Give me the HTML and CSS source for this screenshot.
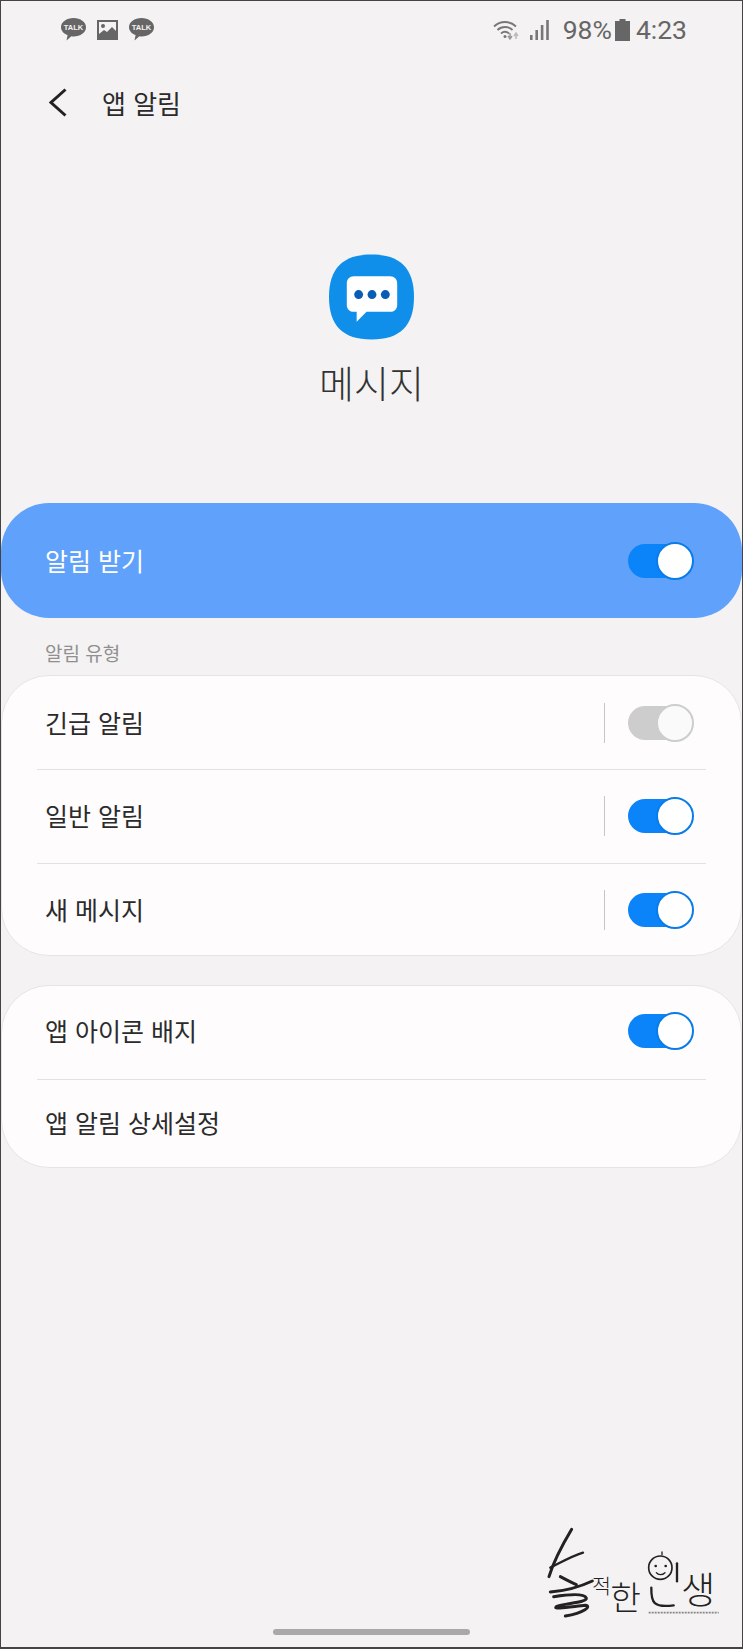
FILE: index.html
```html
<!DOCTYPE html>
<html lang="ko">
<head>
  <meta charset="utf-8">
  <title>앱 알림</title>
  <link rel="stylesheet" href="styles.css">
</head>
<body>
  <div class="screen">
    <div class="status-bar">
      <div class="status-left">
        <svg class="talk-icon" viewBox="0 0 25 23">
          <path d="M12.5 0C19.4 0 25 4 25 9.2S19.4 18.4 12.5 18.4C11.7 18.4 11 18.3 10.3 18.2L5.5 22.5 6.6 17.1C2.6 15.6 0 12.6 0 9.2 0 4 5.6 0 12.5 0Z" fill="#666"/>
          <text x="12.5" y="12" class="talk-text">TALK</text>
        </svg>
        <svg class="pic-icon" viewBox="0 0 21 20">
          <rect width="21" height="20" fill="#666"/>
          <rect x="2" y="2" width="17" height="12.5" fill="#f4f2f3"/>
          <circle cx="6" cy="6" r="2" fill="#666"/>
          <path d="M2 14 7 10 10 12 15 7 19 11V16H2Z" fill="#666"/>
        </svg>
        <svg class="talk-icon" viewBox="0 0 25 23">
          <path d="M12.5 0C19.4 0 25 4 25 9.2S19.4 18.4 12.5 18.4C11.7 18.4 11 18.3 10.3 18.2L5.5 22.5 6.6 17.1C2.6 15.6 0 12.6 0 9.2 0 4 5.6 0 12.5 0Z" fill="#666"/>
          <text x="12.5" y="12" class="talk-text">TALK</text>
        </svg>
      </div>
      <div class="status-right">
        <svg class="wifi-icon" viewBox="0 0 26 22">
          <g fill="none" stroke="#777" stroke-width="1.8">
            <path d="M1 7.5C7 1.5 17 1.5 23 7.5"/>
            <path d="M4.5 11C8.5 7 15.5 7 19.5 11"/>
            <path d="M8 14.5C10.5 12.3 13.5 12.3 16 14.5"/>
          </g>
          <circle cx="12" cy="17.5" r="1.5" fill="#777"/>
          <path d="M17 14V19M15 17 17 20 19 17" fill="none" stroke="#999" stroke-width="1.5"/>
          <path d="M23 20V15M21 17 23 14 25 17" fill="none" stroke="#bbb" stroke-width="1.5"/>
        </svg>
        <svg class="signal-icon" viewBox="0 0 19 20">
          <rect x="0" y="15" width="2.6" height="5" fill="#777"/>
          <rect x="5.4" y="10" width="2.6" height="10" fill="#777"/>
          <rect x="10.8" y="5" width="2.6" height="15" fill="#777"/>
          <rect x="16.2" y="0" width="2.6" height="20" fill="#777"/>
        </svg>
        <span class="battery-text">98%</span>
        <svg class="battery-icon" viewBox="0 0 15 22">
          <path d="M4.5 0H10.5V2H15V22H0V2H4.5Z" fill="#666"/>
        </svg>
        <span class="clock">4:23</span>
      </div>
    </div>

    <div class="app-bar">
      <svg class="back-icon" viewBox="0 0 18 29">
        <path d="M16.5 1.5 2 14.5 16.5 27.5" fill="none" stroke="#222" stroke-width="3"/>
      </svg>
      <span class="app-bar-title">앱 알림</span>
    </div>

    <div class="hero">
      <svg class="app-icon" viewBox="0 0 86 86">
        <path d="M43 0C72 0 86 14 86 43S72 86 43 86 0 72 0 43 14 0 43 0Z" fill="#0f8fea"/>
        <path d="M25 22H62C66 22 69 25 69 29V51C69 55 66 58 62 58H38L28 68V58H25C21 58 18 55 18 51V29C18 25 21 22 25 22Z" fill="#fff"/>
        <circle cx="30" cy="40.500" r="4.500" fill="#0b5cb5"/>
        <circle cx="43.500" cy="40.500" r="4.500" fill="#0b5cb5"/>
        <circle cx="57" cy="40.500" r="4.500" fill="#0b5cb5"/>
      </svg>
      <div class="hero-title">메시지</div>
    </div>

    <div class="master-card">
      <span class="row-label">알림 받기</span>
      <span class="switch"></span>
    </div>

    <div class="section-label">알림 유형</div>

    <div class="card">
      <div class="row row-first">
        <span class="row-label">긴급 알림</span>
        <span class="row-divider"></span>
        <span class="switch switch-off"></span>
      </div>
      <div class="row row-mid">
        <span class="row-label">일반 알림</span>
        <span class="row-divider"></span>
        <span class="switch"></span>
      </div>
      <div class="row row-last">
        <span class="row-label">새 메시지</span>
        <span class="row-divider"></span>
        <span class="switch"></span>
      </div>
    </div>

    <div class="card card-second">
      <div class="row row-first">
        <span class="row-label">앱 아이콘 배지</span>
        <span class="switch"></span>
      </div>
      <div class="row row-last row-short">
        <span class="row-label">앱 알림 상세설정</span>
      </div>
    </div>

    <div class="footer">
      <svg class="logo" viewBox="150 80 525 300">
        <g fill="none" stroke="#222" stroke-linecap="round">
          <path d="M224 90C200 130 172 180 156 232" stroke-width="9"/>
          <path d="M160 205C190 190 225 170 258 160" stroke-width="7"/>
          <path d="M190 232C205 240 220 248 238 256" stroke-width="9"/>
          <path d="M160 278C200 275 250 262 286 245" stroke-width="9"/>
          <path d="M170 292C215 285 262 282 268 296C272 310 200 312 178 322C165 332 225 322 265 318C285 320 262 340 205 350" stroke-width="9"/>
          <circle cx="490" cy="205" r="35" stroke-width="5"/>
          <path d="M478 220C484 228 496 228 504 220" stroke-width="4"/>
          <path d="M495 158V166" stroke-width="4"/>
          <path d="M540 192V246" stroke-width="7"/>
          <path d="M463 265C462 310 470 326 530 318" stroke-width="7"/>
          <path d="M455 340H665" stroke="#888" stroke-width="5" stroke-dasharray="6 3" stroke-linecap="butt"/>
        </g>
        <circle cx="476" cy="200" r="4" fill="#222"/>
        <circle cx="506" cy="200" r="4" fill="#222"/>
        <text x="285" y="284" class="logo-text logo-small">적</text>
        <text x="340" y="332" class="logo-text logo-mid">한</text>
        <text x="552" y="314" class="logo-text logo-big">생</text>
      </svg>
      <div class="home-bar"></div>
    </div>
  </div>
</body>
</html>
```

FILE: styles.css
```css
html, body {
  margin: 0;
  padding: 0;
  background-color: #fff;
}

body {
  width: 743px;
  height: 1649px;
  overflow: hidden;
  font-family: "Noto Sans CJK KR", "Noto Sans", sans-serif;
}

.screen {
  box-sizing: border-box;
  width: 743px;
  height: 1649px;
  display: flex;
  flex-direction: column;
  background-color: #f4f2f3;
  border: 1px solid #444;
  border-bottom-width: 2px;
}

.status-bar {
  height: 57px;
  display: flex;
  align-items: center;
  justify-content: space-between;
  padding: 0 55px 0 60px;
}

.status-left {
  display: flex;
  align-items: center;
  gap: 11px;
}

.talk-icon {
  width: 25px;
  height: 23px;
}

.talk-text {
  font-family: "Liberation Sans", sans-serif;
  font-size: 7.500px;
  font-weight: bold;
  fill: #f4f2f3;
  text-anchor: middle;
}

.pic-icon {
  width: 21px;
  height: 20px;
}

.status-right {
  display: flex;
  align-items: center;
  color: #666;
  font-family: Roboto, sans-serif;
  font-size: 26.500px;
}

.wifi-icon {
  width: 26px;
  height: 22px;
  margin-right: 11px;
}

.signal-icon {
  width: 19px;
  height: 20px;
  margin-right: 14px;
}

.battery-icon {
  width: 15px;
  height: 22px;
  margin: 0 6px 0 3px;
}

.app-bar {
  height: 88px;
  display: flex;
  align-items: center;
  padding-left: 48px;
}

.back-icon {
  width: 18px;
  height: 29px;
  margin-right: 35px;
}

.app-bar-title {
  font-size: 26px;
  color: #2b2b2b;
}

.hero {
  height: 357px;
  box-sizing: border-box;
  padding-top: 108px;
  display: flex;
  flex-direction: column;
  align-items: center;
}

.app-icon {
  width: 85px;
  height: 86px;
}

.hero-title {
  margin-top: 17px;
  font-size: 38px;
  font-weight: 300;
  line-height: 50px;
  color: #333;
}

.master-card {
  height: 115px;
  display: flex;
  align-items: center;
  justify-content: space-between;
  padding: 0 49px 0 44px;
  border-radius: 48px;
  background-color: #60a2fb;
  color: #fff;
}

.section-label {
  padding: 23px 0 10px 44px;
  font-size: 19px;
  line-height: 24px;
  color: #909090;
}

.card {
  border: 1px solid #e6e5e6;
  border-radius: 48px;
  background-color: #fefcfd;
}

.card-second {
  margin-top: 29px;
}

.row {
  box-sizing: border-box;
  height: 94px;
  margin: 0 35px 0 35px;
  padding: 0 13px 0 8px;
  display: flex;
  align-items: center;
  border-bottom: 1px solid #e2e2e2;
}

.row-mid {
  padding-bottom: 2px;
}

.card-second .row-first {
  padding-bottom: 4px;
}

.row-last {
  height: 91px;
  border-bottom: 0;
}

.card-second .row-short {
  height: 87px;
  padding-bottom: 2px;
}

.row-label {
  font-size: 25px;
  margin-right: auto;
  margin-bottom: 2px;
  color: #2b2b2b;
}

.master-card .row-label {
  color: #fff;
}

.row-divider {
  width: 1px;
  height: 40px;
  margin-right: 23px;
  background-color: #c6c6c6;
}

.switch {
  position: relative;
  width: 65px;
  height: 34px;
  border-radius: 17px;
  background-color: #0a84f8;
}

.switch::after {
  content: "";
  position: absolute;
  right: -1px;
  top: -2px;
  box-sizing: border-box;
  width: 38px;
  height: 38px;
  border: 2px solid #0a7cea;
  border-radius: 50%;
  background-color: #fff;
}

.switch-off {
  background-color: #cdcdcd;
}

.switch-off::after {
  border-color: #cdcdcd;
  background-color: #fbfafa;
}

.footer {
  margin-top: auto;
  display: flex;
  flex-direction: column;
  align-items: flex-end;
}

.logo {
  width: 175px;
  height: 100px;
  margin: 0 20px 3px 0;
}

.logo-text {
  fill: #222;
  font-weight: 300;
}

.logo-small {
  font-size: 62px;
}

.logo-mid {
  font-size: 100px;
}

.logo-big {
  font-size: 112px;
}

.home-bar {
  align-self: center;
  width: 197px;
  height: 6px;
  margin-bottom: 12px;
  border-radius: 3px;
  background-color: #a9a9a9;
}
```
